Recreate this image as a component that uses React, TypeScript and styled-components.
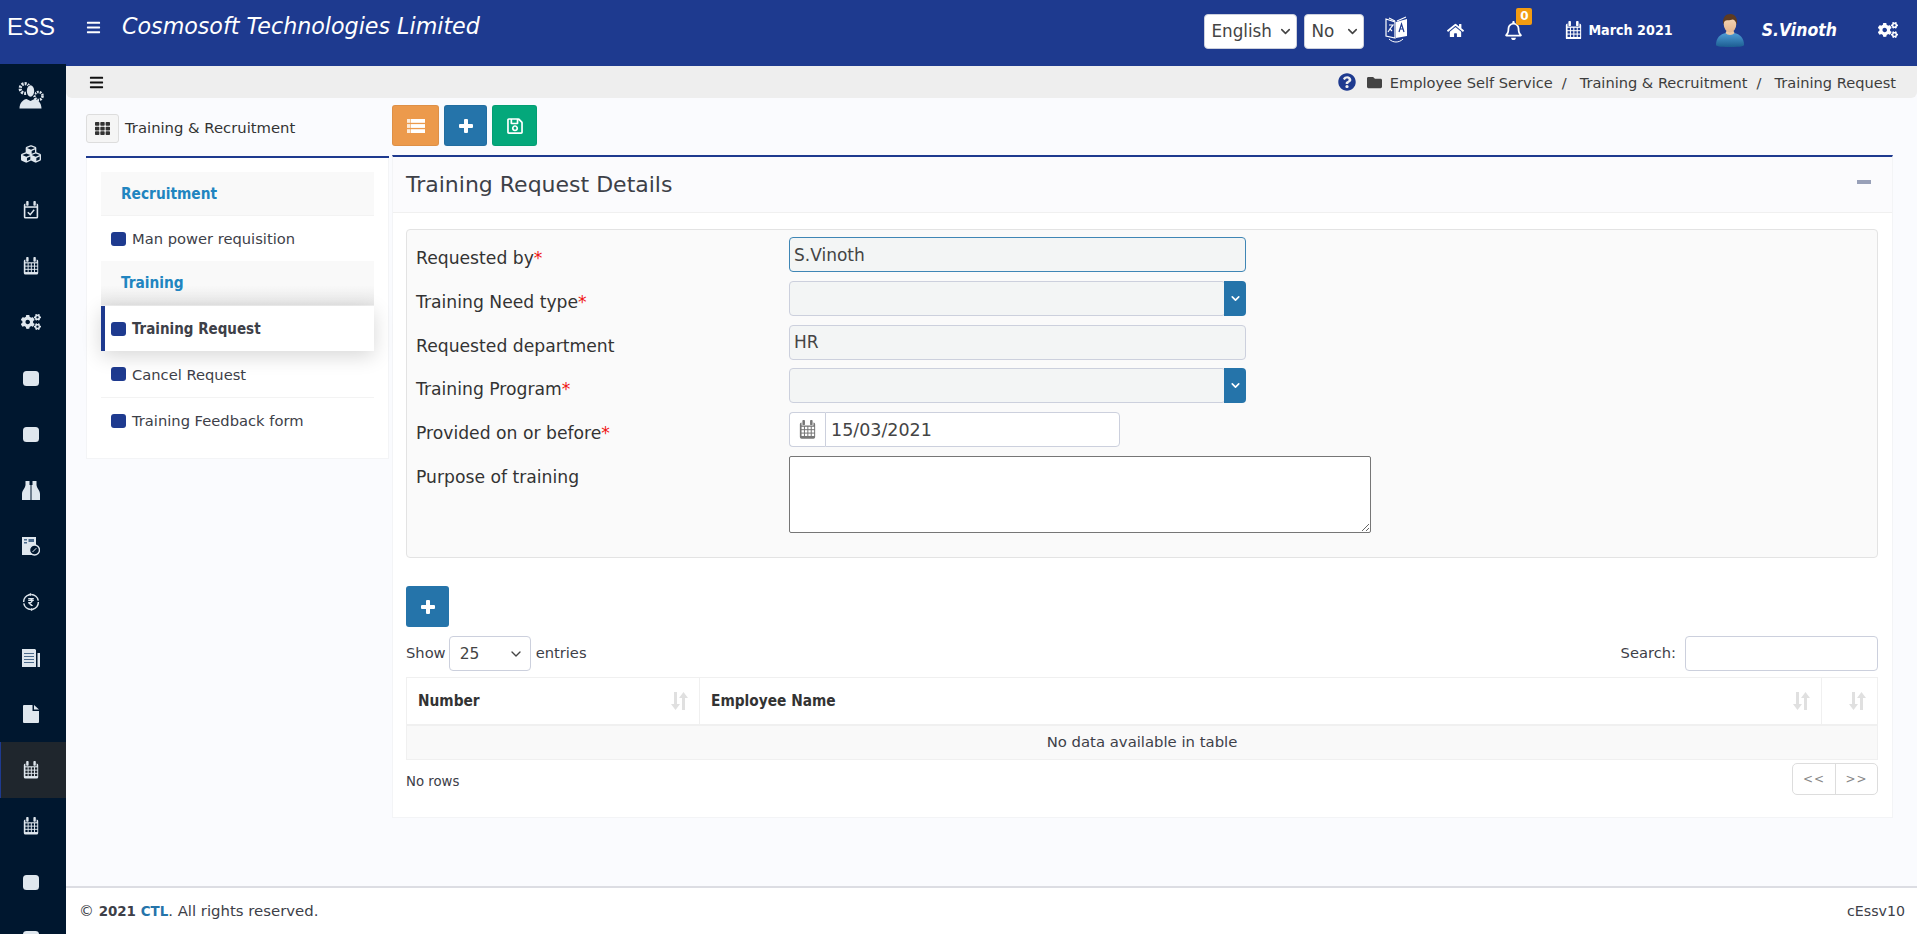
import React from "react";
import styled, { createGlobalStyle } from "styled-components";
import {
  FaBars,
  FaCogs,
  FaCubes,
  FaFolder,
  FaHome,
  FaQuestionCircle,
  FaRegBell,
  FaRegSave,
  FaRupeeSign,
  FaTh,
} from "react-icons/fa";
import { ChevronDown } from "lucide-react";

const BODY_FONT = `"DejaVu Sans", sans-serif`;
const BOLD_FONT = `"DejaVu Sans Condensed", "DejaVu Sans", sans-serif`;
const NAVY = "#1e3a8f";
const SIDE_BG = "#00172f";

const GlobalStyle = createGlobalStyle`
  html, body {
    margin: 0;
    padding: 0;
    background: #fafbfe;
    font-family: ${BODY_FONT};
    color: #3d4048;
  }
  * { box-sizing: border-box; }
`;

function CalendarIcon({
  size = 16,
  checked = false,
  hole = SIDE_BG,
}: {
  size?: number;
  checked?: boolean;
  hole?: string;
}) {
  return (
    <svg width={size} height={size * 1.1} viewBox="0 0 20 22" fill="currentColor">
      <rect x="4" y="0" width="3" height="6" rx="1" />
      <rect x="13" y="0" width="3" height="6" rx="1" />
      <path d="M1 5a2 2 0 0 1 2-2v3.5h14V3a2 2 0 0 1 2 2v15a2 2 0 0 1-2 2H3a2 2 0 0 1-2-2z" />
      {checked ? (
        <>
          <rect x="3" y="8.5" width="14" height="11.5" fill={hole} />
          <path d="M6 14l3 3 5-6" fill="none" stroke="currentColor" strokeWidth="1.8" />
        </>
      ) : (
        <g fill={hole}>
          {[8, 12, 16].map((y) =>
            [3, 7, 11, 15].map((x) => <rect key={`${x}-${y}`} x={x} y={y} width="2.8" height="2.8" />)
          )}
        </g>
      )}
    </svg>
  );
}

function RoundSquare() {
  return (
    <svg width="16" height="15" viewBox="0 0 16 15" fill="currentColor">
      <rect width="16" height="15" rx="3.5" />
    </svg>
  );
}

function PeopleGears() {
  return (
    <svg width="26" height="28" viewBox="0 0 26 28">
      <g fill="none" stroke="currentColor">
        <circle cx="7" cy="7.5" r="4.8" strokeWidth="3.2" strokeDasharray="2 1.1" />
        <circle cx="20.5" cy="15" r="4" strokeWidth="2.6" strokeDasharray="1.8 1" />
      </g>
      <ellipse cx="12.5" cy="10" rx="4.6" ry="6.6" fill={SIDE_BG} />
      <ellipse cx="12.5" cy="10" rx="3.7" ry="5.8" fill="currentColor" />
      <path d="M1.500 27.500c0-6 4-9 7-9.500l4 2 4-2c3 .5 7 3.500 7 9.500z" fill="currentColor" />
    </svg>
  );
}

function Binoculars() {
  return (
    <svg width="18" height="19" viewBox="0 0 18 19" fill="currentColor">
      <path d="M3.500 0h4v4h1v15H0v-6c0-4 3-5 3.500-9z" />
      <path d="M14.500 0h-4v4h-1v15H18v-6c0-4-3-5-3.500-9z" />
    </svg>
  );
}

function DocClock() {
  return (
    <svg width="18" height="19" viewBox="0 0 18 19">
      <rect x="0" y="0" width="14" height="18" fill="currentColor" />
      <rect x="2" y="2" width="3" height="1.5" fill="#4a6a8c" />
      <rect x="6.500" y="2" width="5.500" height="3" fill="#4a6a8c" />
      <rect x="2" y="5" width="3" height="1.5" fill="#4a6a8c" />
      <circle cx="12.500" cy="13" r="5" fill={SIDE_BG} stroke="currentColor" strokeWidth="1.4" />
      <path d="M12.500 13l-2 2M12.500 13l1.800-1.800" stroke="currentColor" strokeWidth="1" />
    </svg>
  );
}

function RupeeCycle() {
  return (
    <svg width="18" height="18" viewBox="0 0 18 18">
      <circle cx="9" cy="9" r="7.400" fill="none" stroke="currentColor" strokeWidth="1.500" strokeDasharray="10 1.600" />
      <path d="M6 1.400l3-1.400v3zM12 16.600l-3 1.400v-3z" fill="currentColor" />
      <FaRupeeSign size={9} x="4.500" y="4.500" />
    </svg>
  );
}

function NewsDoc() {
  return (
    <svg width="18" height="18" viewBox="0 0 18 18">
      <path d="M0 0h13l1 1v17H0z" fill="currentColor" />
      <path d="M15.500 4H18v14h-2.500z" fill="currentColor" />
      <g stroke="#4a6a8c" strokeWidth="1">
        <path d="M2 4.500h10M2 7.500h10M2 10.500h10M2 13.500h10" />
      </g>
    </svg>
  );
}

function FileFold() {
  return (
    <svg width="16" height="18" viewBox="0 0 16 18">
      <path d="M0 1a1 1 0 0 1 1-1h8.500v6H16v11a1 1 0 0 1-1 1H1a1 1 0 0 1-1-1z" fill="currentColor" />
      <path d="M11 0l5 4.500h-5z" fill="currentColor" />
    </svg>
  );
}

function TranslateIcon() {
  return (
    <svg width="24" height="28" viewBox="0 0 24 28">
      <path d="M2 3l9 3v16l-9-2z" fill="none" stroke="#fff" strokeWidth="1.200" />
      <path d="M12 6l11-3v17l-11 2z" fill="#fff" />
      <path d="M5 2l6 3M22 1l-9 4" stroke="#fff" strokeWidth="1.200" fill="none" />
      <path d="M5 9h4l-3 4 2 2M6 13l-2 3" fill="none" stroke="#fff" strokeWidth="1.200" />
      <path d="M15 16l2.500-8 2.500 8M16 13h3" fill="none" stroke={NAVY} strokeWidth="1.200" />
      <path d="M5 23c4 4 10 4 14 0" fill="none" stroke="#fff" strokeWidth="1" />
    </svg>
  );
}

function Avatar() {
  return (
    <svg width="30" height="33" viewBox="0 0 30 33">
      <defs>
        <linearGradient id="shirt" x1="0" y1="0" x2="0" y2="1">
          <stop offset="0" stopColor="#4f9ed6" />
          <stop offset="1" stopColor="#1c5d92" />
        </linearGradient>
        <linearGradient id="skin" x1="0" y1="0" x2="0" y2="1">
          <stop offset="0" stopColor="#f7dcbc" />
          <stop offset="1" stopColor="#e4b48d" />
        </linearGradient>
      </defs>
      <path d="M1 31c0-7 4-11 10-12h8c6 1 10 5 10 12 0 1-3 2-14 2S1 32 1 31z" fill="url(#shirt)" />
      <path d="M10.500 19c2 2.500 7 2.500 9 0l-1.500-3h-6z" fill="#e9c6a3" />
      <ellipse cx="15" cy="10" rx="6.300" ry="8.400" fill="url(#skin)" />
      <path d="M8.200 11C7 3 11 0 15.500 0 20 0 23 4 21.800 11c-.8-3.500-2-5-4-5.500-3 1-7 .5-7.900 1.500-.8 1-1.200 2-1.700 3.500z" fill="#5d3b22" />
    </svg>
  );
}

function ListIcon() {
  return (
    <svg width="18" height="14" viewBox="0 0 18 14" fill="#fff">
      <rect x="0" y="0" width="3.500" height="3.800" opacity="0.8" />
      <rect x="4" y="0" width="14" height="3.800" />
      <rect x="0" y="5.100" width="3.500" height="3.800" opacity="0.8" />
      <rect x="4" y="5.100" width="14" height="3.800" />
      <rect x="0" y="10.200" width="3.500" height="3.800" opacity="0.8" />
      <rect x="4" y="10.200" width="14" height="3.800" />
    </svg>
  );
}

function PlusIcon({ size = 14 }: { size?: number }) {
  return (
    <svg width={size} height={size} viewBox="0 0 14 14" fill="currentColor">
      <path d="M5 1a1 1 0 0 1 1-1h2a1 1 0 0 1 1 1v4h4a1 1 0 0 1 1 1v2a1 1 0 0 1-1 1H9v4a1 1 0 0 1-1 1H6a1 1 0 0 1-1-1V9H1a1 1 0 0 1-1-1V6a1 1 0 0 1 1-1h4z" />
    </svg>
  );
}

function SortIcon() {
  return (
    <SortMark width="17" height="18" viewBox="0 0 17 18" fill="currentColor">
      <path d="M3 0h3v12h3l-4.500 6L0 12h3z" />
      <path d="M11 18h3V6h3l-4.500-6L8 6h3z" />
    </SortMark>
  );
}

const menu = [
  { icon: <PeopleGears />, tall: true },
  { icon: <FaCubes size={20} /> },
  { icon: <CalendarIcon checked /> },
  { icon: <CalendarIcon /> },
  { icon: <FaCogs size={20} /> },
  { icon: <RoundSquare /> },
  { icon: <RoundSquare /> },
  { icon: <Binoculars /> },
  { icon: <DocClock /> },
  { icon: <RupeeCycle /> },
  { icon: <NewsDoc /> },
  { icon: <FileFold /> },
  { icon: <CalendarIcon hole="#1f262d" />, active: true },
  { icon: <CalendarIcon /> },
  { icon: <RoundSquare /> },
  { icon: <RoundSquare /> },
];

export default function App() {
  return (
    <Page>
      <GlobalStyle />
      <TopBar>
        <Brand>ESS</Brand>
        <BurgerSlot>
          <FaBars size={15} />
        </BurgerSlot>
        <Company>Cosmosoft Technologies Limited</Company>
        <TopRight>
          <TopSelectWrap $w={93}>
            <TopSelect defaultValue="English">
              <option>English</option>
            </TopSelect>
            <ChevronDown size={15} strokeWidth={2.5} />
          </TopSelectWrap>
          <TopSelectWrap $w={60} $ml={7}>
            <TopSelect defaultValue="No">
              <option>No</option>
            </TopSelect>
            <ChevronDown size={15} strokeWidth={2.5} />
          </TopSelectWrap>
          <TopIcon $ml={20}>
            <TranslateIcon />
          </TopIcon>
          <TopIcon $ml={39}>
            <FaHome size={17} />
          </TopIcon>
          <BellWrap>
            <FaRegBell size={19} />
            <Badge>0</Badge>
          </BellWrap>
          <TopIcon $ml={42}>
            <CalendarIcon size={17} hole={NAVY} />
          </TopIcon>
          <MonthLabel>March 2021</MonthLabel>
          <TopIcon $ml={42}>
            <Avatar />
          </TopIcon>
          <UserName>S.Vinoth</UserName>
          <TopIcon $ml={41}>
            <FaCogs size={20} />
          </TopIcon>
        </TopRight>
      </TopBar>

      <Body>
        <SideNav>
          {menu.map((m, i) => (
            <SideItem key={i} $active={!!m.active} $tall={!!m.tall}>
              {m.icon}
            </SideItem>
          ))}
        </SideNav>

        <Main>
          <CrumbBar>
            <FaBars size={15} color="#111" />
            <Crumbs>
              <FaQuestionCircle size={18} color={NAVY} />
              <FolderMark>
                <FaFolder size={15} color="#444" />
              </FolderMark>
              <CrumbText>Employee Self Service</CrumbText>
              <CrumbSep>/</CrumbSep>
              <CrumbText>Training &amp; Recruitment</CrumbText>
              <CrumbSep>/</CrumbSep>
              <CrumbText>Training Request</CrumbText>
            </Crumbs>
          </CrumbBar>

          <Content>
            <LeftCol>
              <TileRow>
                <TileButton>
                  <FaTh size={15} />
                </TileButton>
                <TileText>Training &amp; Recruitment</TileText>
              </TileRow>
              <MenuPanel>
                <MenuHeader>Recruitment</MenuHeader>
                <MenuRow>
                  <Bullet />
                  Man power requisition
                </MenuRow>
                <MenuHeader $shade>Training</MenuHeader>
                <MenuRow $active>
                  <Bullet />
                  Training Request
                </MenuRow>
                <MenuRow $line>
                  <Bullet />
                  Cancel Request
                </MenuRow>
                <MenuRow>
                  <Bullet />
                  Training Feedback form
                </MenuRow>
              </MenuPanel>
            </LeftCol>

            <RightCol>
              <Toolbar>
                <ToolButton $bg="#ec9a4c" $w={47}>
                  <ListIcon />
                </ToolButton>
                <ToolButton $bg="#2574aa" $w={43}>
                  <PlusIcon />
                </ToolButton>
                <ToolButton $bg="#04a87b" $w={45}>
                  <FaRegSave size={18} />
                </ToolButton>
              </Toolbar>

              <Card>
                <CardHead>
                  <CardTitle>Training Request Details</CardTitle>
                  <Collapse />
                </CardHead>
                <CardBody>
                  <Well>
                    <Label>
                      Requested by<Star>*</Star>
                    </Label>
                    <Control $w={457}>
                      <TextField $focus readOnly defaultValue="S.Vinoth" />
                    </Control>

                    <Label>
                      Training Need type<Star>*</Star>
                    </Label>
                    <Control $w={457}>
                      <TextField readOnly />
                      <PickButton>
                        <ChevronDown size={13} strokeWidth={3} />
                      </PickButton>
                    </Control>

                    <Label>Requested department</Label>
                    <Control $w={457}>
                      <TextField readOnly defaultValue="HR" />
                    </Control>

                    <Label>
                      Training Program<Star>*</Star>
                    </Label>
                    <Control $w={457}>
                      <TextField readOnly />
                      <PickButton>
                        <ChevronDown size={13} strokeWidth={3} />
                      </PickButton>
                    </Control>

                    <Label>
                      Provided on or before<Star>*</Star>
                    </Label>
                    <Control $w={331}>
                      <DateAddon>
                        <CalendarIcon size={17} hole="#fff" />
                      </DateAddon>
                      <DateField readOnly defaultValue="15/03/2021" />
                    </Control>

                    <Label>Purpose of training</Label>
                    <Purpose />
                  </Well>

                  <AddRowButton>
                    <PlusIcon />
                  </AddRowButton>

                  <TableTools>
                    <ToolText>Show</ToolText>
                    <EntriesWrap>
                      <EntriesSelect defaultValue="25">
                        <option>25</option>
                        <option>50</option>
                      </EntriesSelect>
                      <ChevronDown size={16} />
                    </EntriesWrap>
                    <ToolText>entries</ToolText>
                    <SearchLabel>Search:</SearchLabel>
                    <SearchField />
                  </TableTools>

                  <DataTable>
                    <colgroup>
                      <col style={{ width: 293 }} />
                      <col />
                      <col style={{ width: 56 }} />
                    </colgroup>
                    <thead>
                      <tr>
                        <th>
                          <HeadCell>
                            Number
                            <SortIcon />
                          </HeadCell>
                        </th>
                        <th>
                          <HeadCell>
                            Employee Name
                            <SortIcon />
                          </HeadCell>
                        </th>
                        <th>
                          <HeadCell>
                            <span />
                            <SortIcon />
                          </HeadCell>
                        </th>
                      </tr>
                    </thead>
                    <tbody>
                      <tr>
                        <td colSpan={3}>No data available in table</td>
                      </tr>
                    </tbody>
                  </DataTable>

                  <TableFoot>
                    <NoRows>No rows</NoRows>
                    <Pager>
                      <PagerBtn>&lt;&lt;</PagerBtn>
                      <PagerBtn>&gt;&gt;</PagerBtn>
                    </Pager>
                  </TableFoot>
                </CardBody>
              </Card>
            </RightCol>
          </Content>

          <Footer>
            <span>
              © <FootBold>2021</FootBold> <CtlLink>CTL</CtlLink>. All rights reserved.
            </span>
            <Version>cEssv10</Version>
          </Footer>
        </Main>
      </Body>
    </Page>
  );
}

const Page = styled.div`
  width: 1917px;
  height: 934px;
  overflow: hidden;
  display: flex;
  flex-direction: column;
`;

const TopBar = styled.header`
  height: 66px;
  flex: none;
  background: ${NAVY};
  color: #fff;
  display: flex;
  align-items: center;
  padding: 0 19px 6px 7px;
`;

const Brand = styled.div`
  font: 24px "Liberation Sans", sans-serif;
  width: 48px;
  margin-bottom: 6px;
`;

const BurgerSlot = styled.div`
  display: flex;
  margin: 0 0 6px 31px;
`;

const TopIcon = styled.div<{ $ml?: number }>`
  display: flex;
  align-items: center;
  margin-left: ${(p) => p.$ml ?? 0}px;
`;

const Company = styled.div`
  margin: 0 0 8px 21px;
  font-size: 22.2px;
  font-style: italic;
  white-space: nowrap;
`;

const TopRight = styled.div`
  margin-left: auto;
  display: flex;
  align-items: center;
`;

const TopSelectWrap = styled.div<{ $w: number; $ml?: number }>`
  position: relative;
  width: ${(p) => p.$w}px;
  height: 35px;
  margin-top: 2px;
  margin-left: ${(p) => p.$ml ?? 0}px;
  svg {
    position: absolute;
    right: 4px;
    top: 10px;
    color: #444;
    pointer-events: none;
  }
`;

const TopSelect = styled.select`
  appearance: none;
  width: 100%;
  height: 100%;
  border: 1px solid #ccd0dd;
  border-radius: 4px;
  background: #fff;
  padding: 0 0 0 6px;
  color: #444;
  font-family: ${BODY_FONT};
  font-size: 16.8px;
`;

const BellWrap = styled.div`
  position: relative;
  display: flex;
  margin-left: 40px;
`;

const Badge = styled.span`
  position: absolute;
  left: 12px;
  top: -13px;
  width: 16px;
  height: 17px;
  border-radius: 2px;
  background: #f39c12;
  color: #fff;
  font-size: 12px;
  font-weight: bold;
  text-align: center;
  line-height: 17px;
`;

const MonthLabel = styled.div`
  margin-left: 6px;
  font-family: ${BOLD_FONT};
  font-size: 14.2px;
  font-weight: bold;
  white-space: nowrap;
`;

const UserName = styled.div`
  margin-left: 17px;
  font-family: ${BOLD_FONT};
  font-size: 17.5px;
  font-weight: bold;
  font-style: italic;
  white-space: nowrap;
`;

const Body = styled.div`
  flex: 1;
  min-height: 0;
  display: flex;
`;

const SideNav = styled.nav`
  width: 66px;
  flex: none;
  margin-top: -2px;
  background: ${SIDE_BG};
  color: #dfe7ee;
  position: relative;
  overflow: hidden;
`;

const SideItem = styled.div<{ $active?: boolean; $tall?: boolean }>`
  height: ${(p) => (p.$tall ? 62 : 56)}px;
  display: flex;
  align-items: center;
  justify-content: center;
  padding-right: 6px;
  background: ${(p) => (p.$active ? "#1f262d" : "transparent")};
  border-left: 1px solid ${(p) => (p.$active ? NAVY : "transparent")};
`;

const Main = styled.main`
  flex: 1;
  min-width: 0;
  display: flex;
  flex-direction: column;
`;

const CrumbBar = styled.div`
  height: 32px;
  flex: none;
  background: #eeeeee;
  border-radius: 0 0 6px 6px;
  display: flex;
  align-items: center;
  padding: 0 21px 0 23px;
`;

const Crumbs = styled.div`
  margin-left: auto;
  display: flex;
  align-items: center;
  font-size: 14.6px;
  color: #3d3d3d;
`;

const FolderMark = styled.span`
  display: flex;
  margin: 0 8px 0 11px;
`;

const CrumbText = styled.span`
  white-space: nowrap;
`;

const CrumbSep = styled.span`
  padding: 0 13px 0 9px;
`;

const Content = styled.div`
  flex: 1;
  min-height: 0;
  display: flex;
  gap: 3px;
  padding: 7px 24px 0 20px;
`;

const LeftCol = styled.div`
  width: 303px;
  flex: none;
`;

const TileRow = styled.div`
  margin-top: 9px;
  height: 44px;
  display: flex;
  align-items: flex-start;
  gap: 6px;
  border-bottom: 2px solid ${NAVY};
`;

const TileButton = styled.div`
  width: 33px;
  height: 29px;
  display: flex;
  align-items: center;
  justify-content: center;
  background: #f5f5f5;
  border: 1px solid #dddddd;
  border-radius: 3px;
  color: #333;
`;

const TileText = styled.div`
  font-size: 14.8px;
  line-height: 27px;
  color: #333;
`;

const MenuPanel = styled.div`
  background: #fff;
  border: 1px solid #f3f4f6;
  border-top: 0;
  padding: 14px 14px 15px;
`;

const MenuHeader = styled.div<{ $shade?: boolean }>`
  height: ${(p) => (p.$shade ? 45 : 44)}px;
  display: flex;
  align-items: center;
  padding-left: 20px;
  font-family: ${BOLD_FONT};
  font-size: 15.3px;
  font-weight: bold;
  color: #2185c0;
  border-bottom: 1px solid #f3f3f3;
  background: ${(p) => (p.$shade ? "linear-gradient(#f9f9f9 55%, #e8e8e8)" : "#f9f9f9")};
`;

const MenuRow = styled.div<{ $active?: boolean; $line?: boolean }>`
  height: ${(p) => (p.$line ? 47 : 45)}px;
  display: flex;
  align-items: center;
  gap: 6px;
  padding-left: ${(p) => (p.$active ? 6 : 10)}px;
  font-family: ${(p) => (p.$active ? BOLD_FONT : BODY_FONT)};
  font-size: ${(p) => (p.$active ? 15 : 14.7)}px;
  font-weight: ${(p) => (p.$active ? "bold" : "normal")};
  color: #3d4048;
  background: #fff;
  border-left: ${(p) => (p.$active ? `4px solid ${NAVY}` : "0")};
  border-bottom: ${(p) => (p.$line ? "1px solid #f3f3f3" : "0")};
  box-shadow: ${(p) => (p.$active ? "0 5px 20px rgba(0,0,0,.16)" : "none")};
  position: ${(p) => (p.$active ? "relative" : "static")};
`;

const Bullet = styled.span`
  width: 15px;
  height: 14px;
  border-radius: 3px;
  background: ${NAVY};
  flex: none;
`;

const RightCol = styled.div`
  flex: 1;
  min-width: 0;
`;

const Toolbar = styled.div`
  display: flex;
  gap: 5px;
  height: 50px;
`;

const ToolButton = styled.button<{ $bg: string; $w: number }>`
  width: ${(p) => p.$w}px;
  height: 41px;
  padding: 0;
  border: 1px solid rgba(0, 0, 0, 0.06);
  border-radius: 3px;
  background: ${(p) => p.$bg};
  color: #fff;
  display: flex;
  align-items: center;
  justify-content: center;
`;

const Card = styled.section`
  background: #fff;
  border-top: 2px solid ${NAVY};
  border-right: 1px solid #f3f4f6;
  border-left: 1px solid #f3f4f6;
  border-bottom: 1px solid #f3f4f6;
  height: 663px;
`;

const CardHead = styled.div`
  height: 56px;
  display: flex;
  align-items: center;
  justify-content: space-between;
  padding: 0 21px 0 13px;
  background: #fbfbfd;
  border-bottom: 1px solid #f0f0f0;
`;

const CardTitle = styled.h2`
  margin: 0;
  font-size: 22px;
  font-weight: 400;
  color: #3d4048;
`;

const Collapse = styled.span`
  width: 14px;
  height: 4px;
  margin-bottom: 6px;
  background: #98a0b8;
`;

const CardBody = styled.div`
  padding: 16px 14px 0 13px;
`;

const Well = styled.div`
  height: 329px;
  display: grid;
  grid-template-columns: 373px 1fr;
  grid-auto-rows: 35px;
  row-gap: 8.8px;
  padding: 7px 9px;
  background: #fafafa;
  border: 1px solid #e3e3e3;
  border-radius: 4px;
`;

const Label = styled.label`
  font-size: 17.2px;
  line-height: 20px;
  padding-top: 11px;
  color: #333;
`;

const Star = styled.span`
  color: #f01414;
`;

const Control = styled.div<{ $w: number }>`
  display: flex;
  width: ${(p) => p.$w}px;
  height: 35px;
`;

const TextField = styled.input<{ $focus?: boolean }>`
  flex: 1;
  min-width: 0;
  height: 100%;
  padding: 0 4px;
  border: 1px solid ${(p) => (p.$focus ? "#3f86b5" : "#ccd0dd")};
  border-radius: 4px;
  background: #f3f5f5;
  font-family: ${BODY_FONT};
  font-size: 17px;
  color: #444;
  outline: none;
`;

const PickButton = styled.div`
  width: 22px;
  margin-left: -2px;
  flex: none;
  display: flex;
  align-items: center;
  justify-content: center;
  background: #2574aa;
  color: #fff;
  border-radius: 0 4px 4px 0;
`;

const DateAddon = styled.div`
  width: 36px;
  flex: none;
  display: flex;
  align-items: center;
  justify-content: center;
  background: #fff;
  border: 1px solid #ccd0dd;
  border-right: 0;
  border-radius: 4px 0 0 4px;
  color: #777;
`;

const DateField = styled.input`
  flex: 1;
  min-width: 0;
  height: 100%;
  padding: 0 4px 0 5px;
  border: 1px solid #ccd0dd;
  border-radius: 0 4px 4px 0;
  background: #fff;
  font-family: ${BODY_FONT};
  font-size: 17.5px;
  color: #444;
  outline: none;
`;

const Purpose = styled.textarea`
  width: 582px;
  height: 77px;
  border: 1px solid #767676;
  border-radius: 2px;
  background: #fff;
  margin: 0;
`;

const AddRowButton = styled.button`
  display: flex;
  align-items: center;
  justify-content: center;
  margin-top: 28px;
  width: 43px;
  height: 41px;
  padding: 0;
  border: 0;
  border-radius: 3px;
  background: #2574aa;
  color: #fff;
`;

const TableTools = styled.div`
  margin-top: 9px;
  height: 35px;
  display: flex;
  align-items: center;
`;

const ToolText = styled.span`
  font-size: 14.7px;
  padding-bottom: 3px;
  color: #3d4048;
`;

const EntriesWrap = styled.div`
  position: relative;
  width: 82px;
  height: 35px;
  margin: 0 5px 0 3px;
  svg {
    position: absolute;
    right: 7px;
    top: 10px;
    color: #444;
    pointer-events: none;
  }
`;

const EntriesSelect = styled.select`
  appearance: none;
  width: 100%;
  height: 100%;
  padding: 0 0 0 10px;
  border: 1px solid #ccd0dd;
  border-radius: 4px;
  background: #fff;
  color: #444;
  font-family: ${BODY_FONT};
  font-size: 15.5px;
`;

const SearchLabel = styled(ToolText)`
  margin-left: auto;
  margin-right: 9px;
`;

const SearchField = styled.input`
  width: 193px;
  height: 35px;
  border: 1px solid #ccd0dd;
  border-radius: 4px;
  background: #fff;
`;

const DataTable = styled.table`
  margin-top: 6px;
  width: 100%;
  table-layout: fixed;
  border-collapse: collapse;
  font-size: 14.85px;

  th {
    height: 47px;
    padding: 0 4px 0 11px;
    text-align: left;
    font-family: ${BOLD_FONT};
    font-size: 15.3px;
    font-weight: bold;
    color: #333;
    background: #fff;
    border: 1px solid #f0f0f0;
    border-bottom-width: 2px;
  }
  td {
    height: 35px;
    text-align: center;
    background: #f9f9f9;
    border: 1px solid #f0f0f0;
    color: #3d4048;
  }
`;

const HeadCell = styled.div`
  display: flex;
  align-items: center;
  justify-content: space-between;
`;

const SortMark = styled.svg`
  color: #e0e0e0;
  margin-right: 7px;
  flex: none;
`;

const TableFoot = styled.div`
  margin-top: 3px;
  display: flex;
  align-items: center;
  justify-content: space-between;
`;

const NoRows = styled.span`
  font-size: 13.3px;
  padding-top: 5px;
  color: #3d4048;
`;

const Pager = styled.div`
  display: flex;
  height: 32px;
  border: 1px solid #dddddd;
  border-radius: 5px;
`;

const PagerBtn = styled.span`
  width: 42px;
  display: flex;
  align-items: center;
  justify-content: center;
  font-size: 12px;
  letter-spacing: 1px;
  color: #888;
  & + & {
    border-left: 1px solid #dddddd;
  }
`;

const Footer = styled.footer`
  height: 48px;
  flex: none;
  background: #fff;
  border-top: 2px solid #dcdde3;
  display: flex;
  align-items: center;
  justify-content: space-between;
  padding: 0 12px 0 13px;
  font-size: 14.9px;
  color: #3d4048;
`;

const Version = styled.span`
  font-size: 14.2px;
`;

const FootBold = styled.b`
  font-family: ${BOLD_FONT};
`;

const CtlLink = styled.b`
  font-family: ${BOLD_FONT};
  color: #2574aa;
`;
